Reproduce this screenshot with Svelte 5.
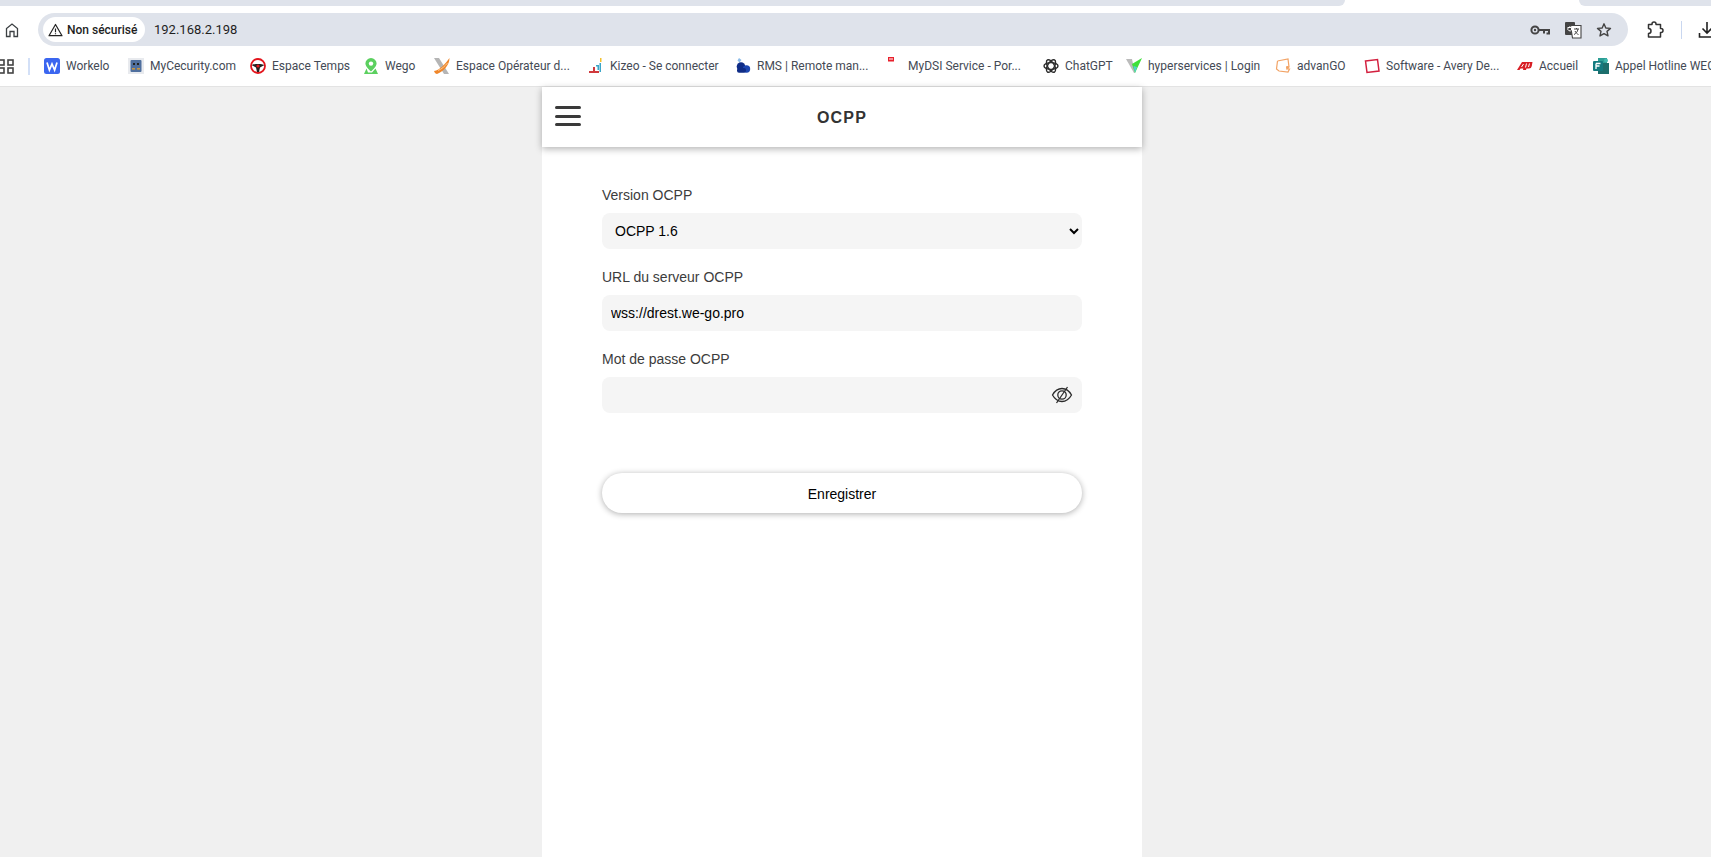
<script>
  const bookmarks = [
    { name: 'Workelo', w: 84, svg: '<rect width="16" height="16" rx="2.5" fill="#3b66f0"/><path d="M3 4.5l2.4 7.5 2.6-6 2.6 6L13 4.5" fill="none" stroke="#fff" stroke-width="1.7"/>' },
    { name: 'MyCecurity.com', w: 122, svg: '<rect width="16" height="16" fill="#e8eaee"/><rect x="2.5" y="2" width="11" height="12" rx="1" fill="#4f6f9e"/><rect x="5" y="5" width="2" height="2" fill="#222"/><rect x="9" y="5" width="2" height="2" fill="#222"/><rect x="4" y="10" width="3" height="1.6" fill="#c89540"/><rect x="9" y="10" width="3" height="1.6" fill="#c89540"/>' },
    { name: 'Espace Temps', w: 113, svg: '<circle cx="8" cy="8" r="7" fill="#fff" stroke="#e3141c" stroke-width="1.8"/><path d="M1.5 7C4 5.5 12 5.5 14.5 7L10 9.5 9 14H7L6 9.5Z" fill="#222"/><circle cx="8" cy="8" r="1.6" fill="#e3141c"/>' },
    { name: 'Wego', w: 71, svg: '<path d="M8 0a5.6 5.6 0 0 0-5.6 5.6C2.400 9.200 8 13.500 8 13.500s5.600-4.300 5.600-7.900A5.600 5.600 0 0 0 8 0Z" fill="#5bd05f"/><circle cx="8" cy="5.600" r="2.200" fill="#fff"/><path d="M3.500 10.500 1 16h14l-2.500-5.500-3.500 4h-4Z" fill="#5bd05f"/>' },
    { name: 'Espace Opérateur d...', w: 154, svg: '<path d="M0 0h5l10 16h-5Z" fill="#b5b5b5"/><path d="M0 13C6 12 11 6 15.500 0 15.500 7 10 13 3 16 2 16 .5 15 0 13Z" fill="#f0862a"/><path d="M4 12.500C8 11 11 8 13.500 5" stroke="#fbc88f" stroke-width="1" fill="none"/>' },
    { name: 'Kizeo - Se connecter', w: 147, svg: '<path d="M1 13h10v2H1z" fill="#d0393c"/><path d="M5 9h2v5H5z" fill="#d0393c"/><path d="M8 7h3v5h-1.500V8.500H8z" fill="#3ba6c9"/><path d="M11.500 5h1.500v9h-1.500z" fill="#3ba6c9"/><path d="M12 0h1.500v4H12z" fill="#f2c230"/>' },
    { name: 'RMS | Remote man...', w: 151, svg: '<path d="M4 0 6.500 2 4.500 4.500 2.500 2.500Z" fill="#8bbcea"/><circle cx="6" cy="8.500" r="4.300" fill="#0f2c87"/><circle cx="11.500" cy="11" r="3.700" fill="#1c46b0"/><rect x="2" y="10" width="9" height="4.700" rx="2" fill="#0f2c87"/>' },
    { name: 'MyDSI Service - Por...', w: 157, svg: '<rect x="2" y="-1" width="6" height="4.500" fill="#e8202c"/><rect x="3" y="0.500" width="4" height="1" fill="#fff"/>' },
    { name: 'ChatGPT', w: 83, svg: '<g fill="none" stroke="#2b2b2b" stroke-width="1.400"><ellipse cx="8" cy="8" rx="7" ry="3.400"/><ellipse cx="8" cy="8" rx="7" ry="3.400" transform="rotate(60 8 8)"/><ellipse cx="8" cy="8" rx="7" ry="3.400" transform="rotate(120 8 8)"/></g>' },
    { name: 'hyperservices | Login', w: 149, svg: '<path d="M0 1h6l3 14H8Z" fill="#bbb"/><path d="M16 0 9 15 6 6Z" fill="#3fe03a"/><path d="M9 15 7.500 8 11 9Z" fill="#4fd0d0"/>' },
    { name: 'advanGO', w: 89, svg: '<path d="M2.500 3 13 1l1 8H11M2.500 3 1.500 11l2.500 2 9 1 1.500-3H11" fill="none" stroke="#f2a365" stroke-width="1.200"/><circle cx="12.500" cy="9.500" r="1.500" fill="#f2a365"/>' },
    { name: 'Software - Avery De...', w: 153, svg: '<path d="M1.500 3 13.500 1.500 15 13 3 14.500Z" fill="#fff" stroke="#d3203f" stroke-width="1.500"/>' },
    { name: 'Accueil', w: 76, svg: '<path d="M0 12 5 4h10.500l-.7 4a3 3 0 0 1-3 2.500H9.500L9 12H6l.3-1.500H3.500L2.500 12Z" fill="#d81f26"/><path d="M4.500 9 6.500 6M8.500 9.500 9.500 5.500M11.500 9l1-3.500" stroke="#fff" stroke-width="1"/>' },
    { name: 'Appel Hotline WEGO', w: 200, svg: '<rect x="5" y="0" width="9" height="6" fill="#2d9e95"/><rect x="5" y="5" width="11" height="11" fill="#1c6e6c"/><rect x="0" y="3" width="10" height="10" rx="1" fill="#137a7f"/><path d="M3 5.500h4.500M3 8h3.500M3 5.500V11" stroke="#fff" stroke-width="1.300"/><circle cx="13" cy="2.500" r="2" fill="#41b8ae"/>' }
  ];
</script>

<div class="chrome">
  <div class="tabs">
    <div class="tab-left"></div>
    <div class="tab-right"></div>
  </div>

  <div class="toolbar">
    <svg class="home" width="16" height="16" viewBox="0 0 16 16" fill="none" stroke="#3c4043" stroke-width="1.300">
      <path d="M2.500 14.500V6.500L8 2l5.500 4.500v8H10V9.500H6v5Z" />
    </svg>
    <div class="omnibox">
      <div class="chip">
        <svg width="15" height="14" viewBox="0 0 15 14" fill="none" stroke="#222" stroke-width="1.200">
          <path d="M7.500 1.500 14 12.700H1Z" stroke-linejoin="round" />
          <path d="M7.500 5.500v3.700M7.500 10.200v1" />
        </svg>
        <span>Non sécurisé</span>
      </div>
      <span class="url">192.168.2.198</span>
      <div class="omni-icons">
        <svg width="20" height="12" viewBox="0 0 20 12" fill="none" stroke="#444" stroke-width="2">
          <circle cx="5" cy="6" r="3.600" />
          <circle cx="5" cy="6" r="1.200" fill="#444" stroke="none" />
          <path d="M8.800 6h10.200v3.500h-2.500M14 6v3.500" />
        </svg>
        <svg width="18" height="18" viewBox="0 0 18 18">
          <rect x="1" y="1" width="10" height="13" rx="1" fill="#444" />
          <path d="M6.500 4.500h10.500v12.500H8.500Z" fill="#fff" stroke="#444" stroke-width="1.100" />
          <path d="M3.500 6.500h4v2.500a2 2 0 1 1-1-3" fill="none" stroke="#fff" stroke-width="1" />
          <path d="M10 8h5M12.500 7v1M14 8c-.5 3-2 4.500-4 5.500M11 10c.7 1.500 2 3 3.500 3.500" fill="none" stroke="#444" stroke-width="1" />
        </svg>
        <svg width="16" height="16" viewBox="0 0 16 16" fill="none" stroke="#444" stroke-width="1.400">
          <path d="M8 1.800 9.800 6l4.700.4-3.500 3 1 4.500L8 11.600 4 13.900l1-4.500-3.500-3L6.200 6Z" stroke-linejoin="round" />
        </svg>
      </div>
    </div>
    <svg class="puzzle" width="18" height="18" viewBox="0 0 18 18" fill="none" stroke="#333" stroke-width="1.500">
      <path d="M2.500 3.500h3.500v-.5a2 2 0 0 1 4 0v.5h4.500v4h.5a2 2 0 0 1 0 4h-.5v4.500H2.500v-3.500a2.500 2.500 0 0 0 0-5Z" stroke-linejoin="round" />
    </svg>
    <div class="tool-sep"></div>
    <svg class="download" width="18" height="18" viewBox="0 0 18 18" fill="none" stroke="#222" stroke-width="1.600">
      <path d="M9 1v11M4.500 7.500 9 12l4.500-4.500M1.500 12v4h15v-4" />
    </svg>
  </div>

  <div class="bookmarks">
    <svg class="apps" width="14" height="15" viewBox="0 0 14 15" fill="none" stroke="#444" stroke-width="1.600">
      <rect x="-1" y="1" width="5" height="5" />
      <rect x="8" y="1" width="5" height="5" />
      <rect x="-1" y="9" width="5" height="5" />
      <rect x="8" y="9" width="5" height="5" />
    </svg>
    <div class="bm-sep"></div>
    {#each bookmarks as b}
      <div class="bm" style="width: {b.w}px">
        <svg width="16" height="16" viewBox="0 0 16 16">{@html b.svg}</svg>
        <span>{b.name}</span>
      </div>
    {/each}
  </div>
</div>

<main class="page">
  <section class="panel">
    <header class="head">
      <button class="burger" aria-label="Menu"><i></i><i></i><i></i></button>
      <h1>OCPP</h1>
    </header>
    <form class="form">
      <div class="field">
        <label for="ver">Version OCPP</label>
        <select id="ver"><option>OCPP 1.6</option></select>
      </div>
      <div class="field">
        <label for="url">URL du serveur OCPP</label>
        <input id="url" type="text" value="wss://drest.we-go.pro" />
      </div>
      <div class="field">
        <label for="pw">Mot de passe OCPP</label>
        <div class="pw">
          <input id="pw" type="password" />
          <svg class="eye" width="22" height="22" viewBox="0 0 22 22" fill="none" stroke="#2b2b2b" stroke-width="1.300">
            <path d="M1.500 11C4 6.500 7 4.500 11 4.500S18 6.500 20.500 11C18 15.500 15 17.500 11 17.500S4 15.500 1.500 11Z" />
            <circle cx="11" cy="11" r="4.200" />
            <path d="M16.500 3 5.500 19" />
          </svg>
        </div>
      </div>
      <button type="button" class="save">Enregistrer</button>
    </form>
  </section>
</main>

<style>
  :global(body) {
    margin: 0;
    background: #f0f0f0;
    overflow: hidden;
    font-family: "Liberation Sans", Arial, sans-serif;
  }
  .chrome {
    background: #fff;
    height: 86px;
    border-bottom: 1px solid #e3e3e3;
    overflow: hidden;
  }
  .tabs {
    height: 6px;
    display: flex;
    justify-content: space-between;
  }
  .tab-left {
    width: 1345px;
    background: #dfe3eb;
    border-bottom-right-radius: 8px;
  }
  .tab-right {
    width: 132px;
    background: #dfe3eb;
    border-bottom-left-radius: 8px;
  }
  .toolbar {
    margin-top: 7px;
    height: 33px;
    display: flex;
    align-items: center;
  }
  .home {
    margin-left: 4px;
    width: 16px;
    flex: none;
  }
  .omnibox {
    margin-left: 18px;
    width: 1590px;
    flex: none;
    height: 33px;
    border-radius: 17px;
    background: #dfe3eb;
    display: flex;
    align-items: center;
    box-sizing: border-box;
    padding-left: 5px;
    font-family: Roboto, sans-serif;
  }
  .chip {
    display: flex;
    align-items: center;
    gap: 4px;
    height: 25px;
    width: 102px;
    box-sizing: border-box;
    padding-left: 5px;
    border-radius: 13px;
    background: #fff;
    font-size: 12px;
    font-weight: 500;
    color: #1f1f1f;
    white-space: nowrap;
  }
  .url {
    margin-left: 9px;
    font-size: 13px;
    color: #1f1f1f;
  }
  .omni-icons {
    margin-left: auto;
    margin-right: 16px;
    display: flex;
    align-items: center;
    gap: 14px;
  }
  .puzzle {
    margin-left: 18px;
    flex: none;
  }
  .tool-sep {
    margin-left: 17px;
    width: 1px;
    height: 18px;
    background: #c9d7f0;
    flex: none;
  }
  .download {
    margin-left: 16px;
    flex: none;
  }
  .bookmarks {
    height: 40px;
    display: flex;
    align-items: center;
    white-space: nowrap;
    font-family: Roboto, sans-serif;
    font-size: 12px;
    color: #444a55;
  }
  .apps {
    flex: none;
  }
  .bm-sep {
    margin-left: 14px;
    margin-right: 14px;
    width: 2px;
    height: 17px;
    background: #d3e0f7;
    flex: none;
  }
  .bm {
    flex: none;
    display: flex;
    align-items: center;
    gap: 6px;
  }
  .bm svg {
    flex: none;
    overflow: visible;
  }
  .page {
    display: flex;
    padding-left: 542px;
    height: 770px;
  }
  .panel {
    width: 600px;
    background: #fff;
  }
  .head {
    height: 60px;
    box-sizing: border-box;
    padding-top: 2px;
    background: #fff;
    box-shadow: 0 2px 7px rgba(0, 0, 0, 0.3);
    display: flex;
    align-items: center;
    justify-content: center;
    position: relative;
  }
  .head h1 {
    margin: 0;
    font-size: 16px;
    font-weight: 700;
    letter-spacing: 1.2px;
    color: #333;
  }
  .burger {
    position: absolute;
    left: 13px;
    top: 19px;
    width: 26px;
    height: 20px;
    padding: 0;
    border: 0;
    background: none;
    display: flex;
    flex-direction: column;
    justify-content: space-between;
  }
  .burger i {
    display: block;
    height: 3px;
    border-radius: 2px;
    background: #3a3a3a;
  }
  .form {
    padding: 39px 60px 0;
    display: flex;
    flex-direction: column;
  }
  .field {
    margin-bottom: 19px;
    display: flex;
    flex-direction: column;
  }
  label {
    font-size: 14px;
    line-height: 16px;
    padding-top: 1px;
    color: #3c3c3c;
    margin-bottom: 10px;
  }
  select,
  input {
    display: block;
    width: 100%;
    height: 36px;
    box-sizing: border-box;
    border: 0;
    outline: 0;
    border-radius: 8px;
    background: #f5f5f5;
    font-family: "Liberation Sans", Arial, sans-serif;
    font-size: 14px;
    color: #000;
  }
  select {
    padding: 0 9px;
  }
  input {
    padding: 0 9px;
  }
  .pw {
    position: relative;
  }
  .eye {
    position: absolute;
    right: 9px;
    top: 7px;
  }
  .save {
    margin-top: 41px;
    height: 40px;
    padding: 2px 0 0;
    border: 0;
    border-radius: 20px;
    background: #fff;
    box-shadow: 0 1px 6px rgba(0, 0, 0, 0.32);
    font-family: "Liberation Sans", Arial, sans-serif;
    font-size: 14px;
    color: #000;
  }
</style>
